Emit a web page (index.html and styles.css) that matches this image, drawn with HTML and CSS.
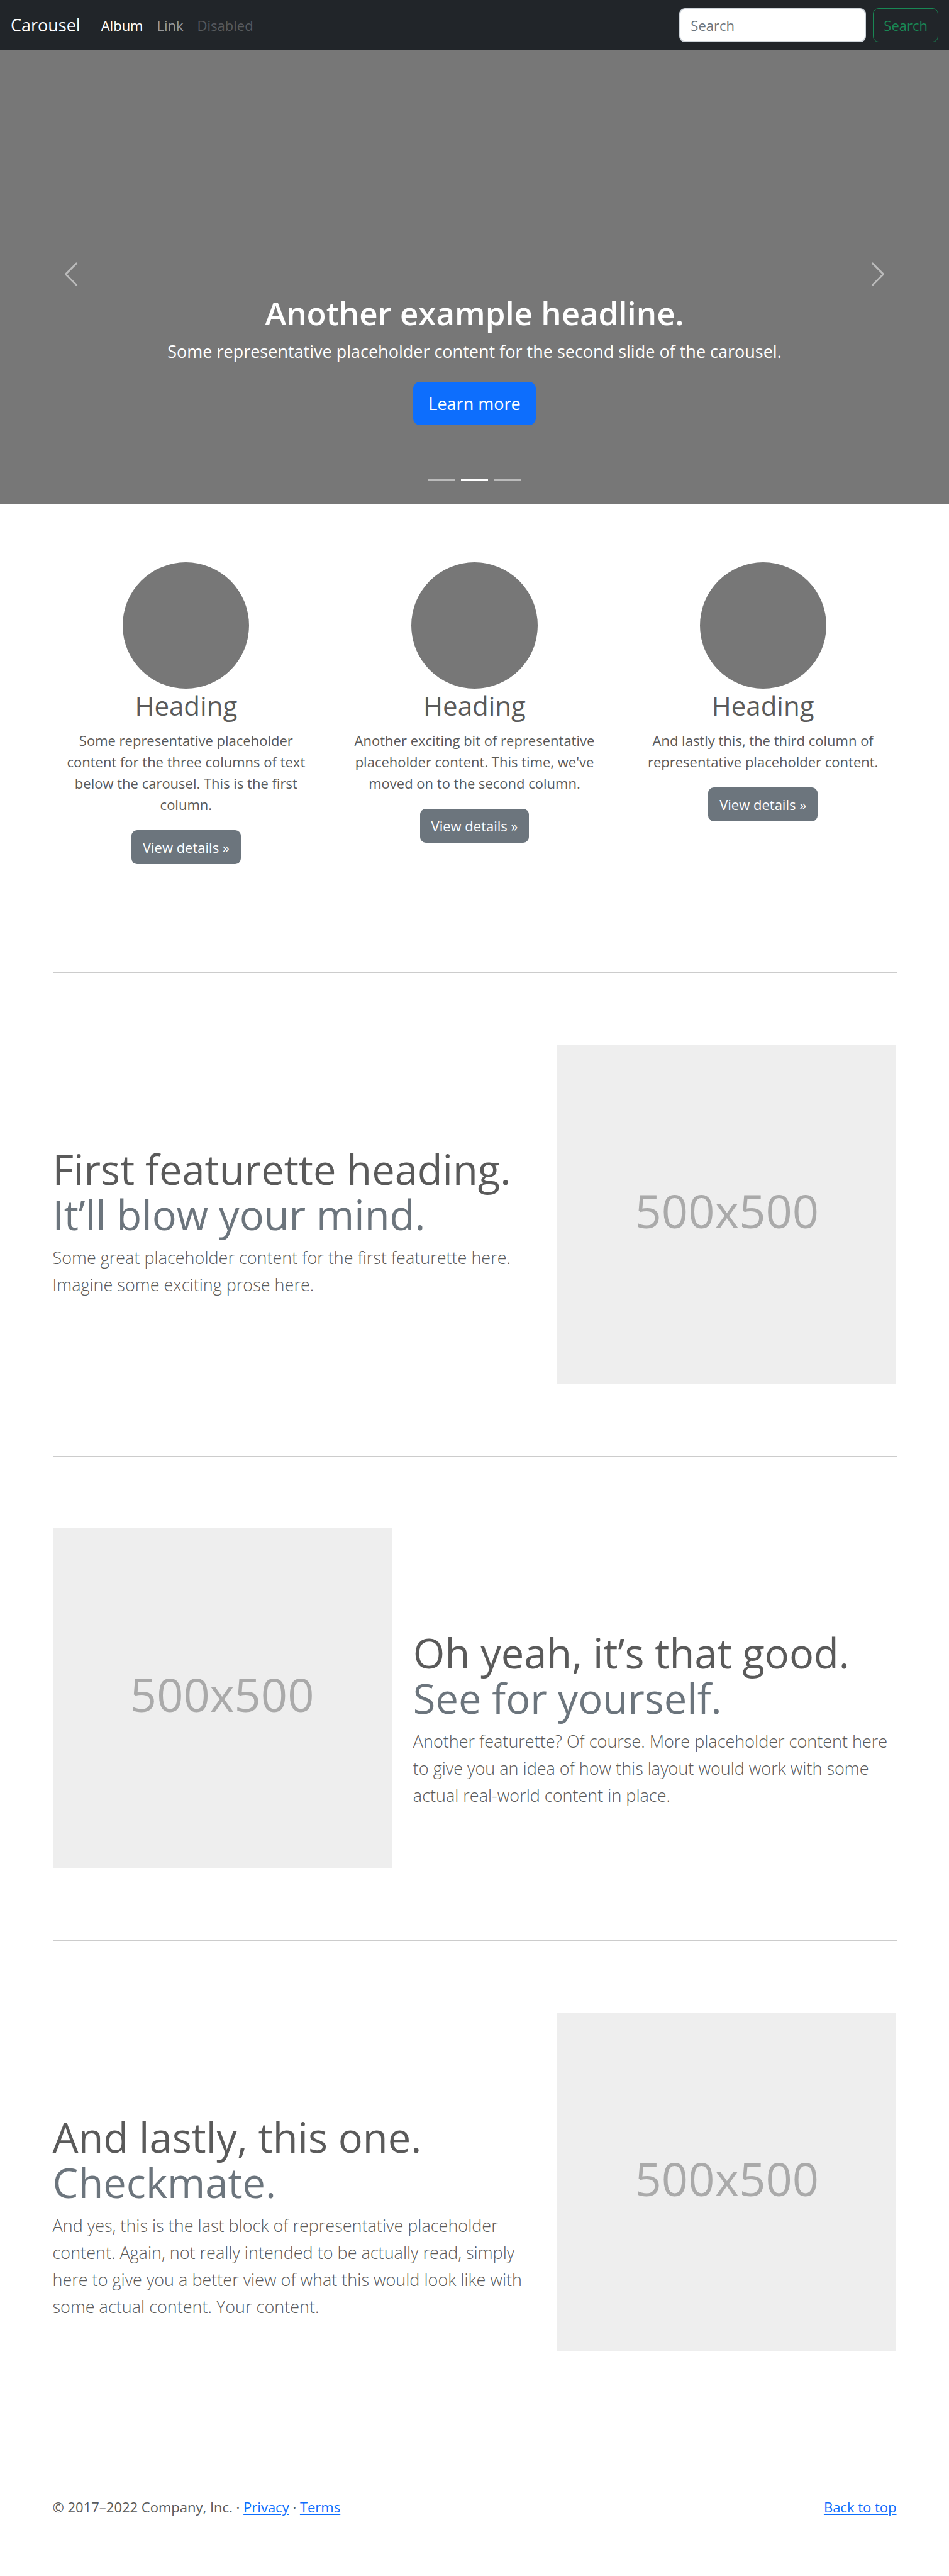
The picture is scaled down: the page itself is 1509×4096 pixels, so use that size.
FILE: index.html
```html
<!DOCTYPE html>
<html lang="en">
<head>
  <meta charset="utf-8">
  <meta name="viewport" content="width=device-width, initial-scale=1">
  <title>Carousel</title>
  <link rel="stylesheet" href="styles.css">
</head>
<body>
  <header class="navbar" id="top">
    <a class="navbar-brand" href="#">Carousel</a>
    <nav class="navbar-nav" aria-label="Main">
      <a class="nav-link active" href="#" aria-current="page">Album</a>
      <a class="nav-link" href="#">Link</a>
      <a class="nav-link disabled" href="#" aria-disabled="true">Disabled</a>
    </nav>
    <form class="search" role="search">
      <input class="search-input" type="search" placeholder="Search" aria-label="Search">
      <button class="search-button" type="submit">Search</button>
    </form>
  </header>

  <main>
    <section class="carousel" aria-label="Highlights">
      <div class="carousel-caption">
        <h1>Another example headline.</h1>
        <p>Some representative placeholder content for the second slide of the carousel.</p>
        <a class="btn btn-primary" href="#">Learn more</a>
      </div>
      <button class="carousel-control prev" type="button" aria-label="Previous">
        <svg viewBox="0 0 16 16" fill="#fff" aria-hidden="true"><path d="M11.354 1.646a.5.5 0 0 1 0 .708L5.707 8l5.647 5.646a.5.5 0 0 1-.708.708l-6-6a.5.5 0 0 1 0-.708l6-6a.5.5 0 0 1 .708 0z"/></svg>
      </button>
      <button class="carousel-control next" type="button" aria-label="Next">
        <svg viewBox="0 0 16 16" fill="#fff" aria-hidden="true"><path d="M4.646 1.646a.5.5 0 0 1 .708 0l6 6a.5.5 0 0 1 0 .708l-6 6a.5.5 0 0 1-.708-.708L10.293 8 4.646 2.354a.5.5 0 0 1 0-.708z"/></svg>
      </button>
      <div class="carousel-indicators">
        <button type="button" aria-label="Slide 1"></button>
        <button type="button" class="active" aria-label="Slide 2" aria-current="true"></button>
        <button type="button" aria-label="Slide 3"></button>
      </div>
    </section>

    <div class="container">
      <div class="columns">
        <article class="column">
          <div class="avatar"></div>
          <h2>Heading</h2>
          <p>Some representative placeholder content for the three columns of text below the carousel. This is the first column.</p>
          <a class="btn btn-secondary" href="#">View details »</a>
        </article>
        <article class="column">
          <div class="avatar"></div>
          <h2>Heading</h2>
          <p>Another exciting bit of representative placeholder content. This time, we've moved on to the second column.</p>
          <a class="btn btn-secondary" href="#">View details »</a>
        </article>
        <article class="column">
          <div class="avatar"></div>
          <h2>Heading</h2>
          <p>And lastly this, the third column of representative placeholder content.</p>
          <a class="btn btn-secondary" href="#">View details »</a>
        </article>
      </div>

      <hr class="divider">

      <section class="featurette">
        <div class="featurette-text">
          <h2>First featurette heading. <span>It’ll blow your mind.</span></h2>
          <p>Some great placeholder content for the first featurette here. Imagine some exciting prose here.</p>
        </div>
        <div class="placeholder">500x500</div>
      </section>

      <hr class="divider">

      <section class="featurette reverse">
        <div class="featurette-text">
          <h2>Oh yeah, it’s that good. <span>See for yourself.</span></h2>
          <p>Another featurette? Of course. More placeholder content here to give you an idea of how this layout would work with some actual real-world content in place.</p>
        </div>
        <div class="placeholder">500x500</div>
      </section>

      <hr class="divider">

      <section class="featurette">
        <div class="featurette-text">
          <h2>And lastly, this one. <span>Checkmate.</span></h2>
          <p>And yes, this is the last block of representative placeholder content. Again, not really intended to be actually read, simply here to give you a better view of what this would look like with some actual content. Your content.</p>
        </div>
        <div class="placeholder">500x500</div>
      </section>

      <hr class="divider">
    </div>
  </main>

  <footer class="container footer">
    <p>© 2017–2022 Company, Inc. · <a href="#">Privacy</a> · <a href="#">Terms</a></p>
    <a href="#top">Back to top</a>
  </footer>
</body>
</html>
```

FILE: styles.css
```css
*,
*::before,
*::after {
  box-sizing: border-box;
}

body {
  margin: 0;
  padding-top: 69px;
  background: #fff;
  color: #5a5a5a;
  font-family: "Open Sans", "Noto Sans", sans-serif;
  font-size: 22px;
  line-height: 34px;
}

h1,
h2,
p {
  margin: 0;
  font-weight: 400;
}

a {
  color: #0d6efd;
}

button,
input {
  font: inherit;
}

/* Navbar */

.navbar {
  position: fixed;
  top: 0;
  left: 0;
  right: 0;
  z-index: 10;
  display: flex;
  align-items: center;
  height: 80px;
  padding: 0 17px;
  background: #212529;
}

.navbar-brand {
  margin-right: 22px;
  color: #fff;
  font-size: 27px;
  text-decoration: none;
}

.navbar-nav {
  display: flex;
}

.nav-link {
  padding: 0 11px;
  color: rgba(255, 255, 255, 0.55);
  text-decoration: none;
}

.nav-link.active {
  color: #fff;
}

.nav-link.disabled {
  color: rgba(255, 255, 255, 0.25);
}

.search {
  display: flex;
  gap: 11px;
  margin-left: auto;
}

.search-input {
  width: 297px;
  height: 54px;
  padding: 0 16px;
  border: 2px solid #ced4da;
  border-radius: 9px;
  background: #fff;
  color: #212529;
}

.search-input::placeholder {
  color: #6c757d;
  opacity: 1;
}

.search-button {
  height: 54px;
  padding: 0 16px;
  border: 1px solid #198754;
  border-radius: 9px;
  background: transparent;
  color: #198754;
}

/* Buttons */

.btn {
  display: inline-block;
  color: #fff;
  text-decoration: none;
}

.btn-primary {
  padding: 13px 24px;
  border-radius: 11px;
  background: #0d6efd;
  font-size: 27px;
  line-height: 43px;
}

.btn-secondary {
  padding: 10px 18px;
  border-radius: 9px;
  background: #6c757d;
}

/* Carousel */

.carousel {
  position: relative;
  display: flex;
  flex-direction: column;
  justify-content: flex-end;
  min-height: 733px;
  margin-bottom: 92px;
  padding: 0 15% 126px;
  background: #777;
  color: #fff;
  text-align: center;
}

.carousel-caption h1 {
  margin-bottom: 11px;
  font-size: 51px;
  font-weight: 600;
  line-height: 62px;
}

.carousel-caption p {
  margin-bottom: 28px;
  font-size: 27px;
  line-height: 40px;
}

.carousel-control {
  position: absolute;
  top: 0;
  bottom: 0;
  display: flex;
  align-items: center;
  justify-content: center;
  width: 15%;
  padding: 0;
  border: 0;
  background: none;
  opacity: 0.5;
}

.carousel-control.prev {
  left: 0;
}

.carousel-control.next {
  right: 0;
}

.carousel-control svg {
  width: 46px;
  height: 46px;
}

.carousel-indicators {
  position: absolute;
  left: 0;
  right: 0;
  bottom: 37px;
  display: flex;
  justify-content: center;
  gap: 9px;
}

.carousel-indicators button {
  width: 43px;
  height: 4px;
  padding: 0;
  border: 0;
  background: #fff;
  opacity: 0.5;
}

.carousel-indicators .active {
  opacity: 1;
}

/* Three columns */

.container {
  max-width: 1376px;
  margin: 0 auto;
  padding: 0 17px;
}

.columns {
  display: grid;
  grid-template-columns: repeat(3, 1fr);
  margin: 0 -17px;
}

.column {
  padding: 0 34px 57px;
  text-align: center;
}

.avatar {
  width: 201px;
  height: 201px;
  margin: 0 auto;
  border-radius: 50%;
  background: #777;
}

.column h2 {
  margin-bottom: 11px;
  font-size: 42px;
  line-height: 54px;
}

.column p {
  margin-bottom: 24px;
}

/* Featurettes */

.divider {
  height: 1px;
  margin: 115px 0 114px;
  border: 0;
  background: #ccc;
}

.featurette {
  display: grid;
  grid-template-columns: 7fr 5fr;
  margin: 0 -17px;
}

.featurette.reverse {
  grid-template-columns: 5fr 7fr;
}

.featurette.reverse .featurette-text {
  order: 1;
}

.featurette-text {
  padding: 162px 17px 0;
}

.featurette h2 {
  margin-bottom: 11px;
  font-size: 65px;
  line-height: 72px;
}

.featurette h2 span {
  display: block;
  color: #6c757d;
}

.featurette p {
  font-size: 27px;
  font-weight: 300;
  line-height: 43px;
}

.placeholder {
  display: flex;
  align-items: center;
  justify-content: center;
  aspect-ratio: 1;
  margin: 0 17px;
  padding-bottom: 11px;
  background: #eee;
  color: #aaa;
  font-size: 74px;
}

.footer {
  display: flex;
  justify-content: space-between;
  padding-bottom: 90px;
}
```
